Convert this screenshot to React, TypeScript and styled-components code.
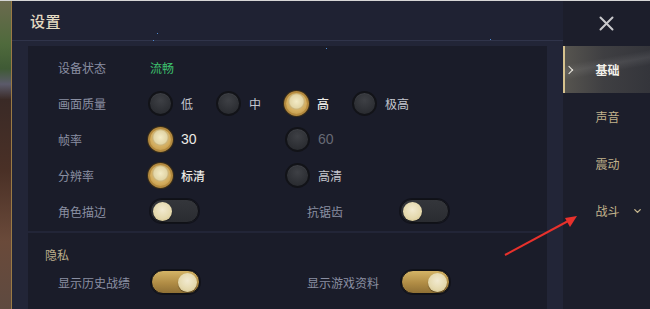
import React from 'react';
import styled, { createGlobalStyle } from 'styled-components';
import { ChevronDown } from 'lucide-react';

const GlobalStyle = createGlobalStyle`
  body {
    margin: 0;
    background: #1b1d2a;
    font-family: "Noto Sans CJK SC", "Noto Sans", sans-serif;
  }
`;

const Screen = styled.div`
  position: relative;
  display: flex;
  width: 650px;
  height: 309px;
  box-sizing: border-box;
  border-top: 1px solid #d6d6d6;
  overflow: hidden;
  background: #1b1d2a;
`;

const Scene = styled.div`
  width: 11px;
  flex-shrink: 0;
  border-right: 1px solid #9a7a44;
  background: linear-gradient(
    180deg,
    #6b6a4e 0%,
    #4f6a3c 14%,
    #3f5a35 22%,
    #5b5a6a 27%,
    #3a2a26 32%,
    #4a3026 55%,
    #6a4a3a 78%,
    #5e4a40 100%
  );
`;

const Panel = styled.section`
  display: flex;
  flex-direction: column;
  width: 551px;
  flex-shrink: 0;
  background: #222537;
`;

const Header = styled.header`
  position: relative;
  display: flex;
  align-items: center;
  height: 39px;
  padding-left: 18px;
  background: #1f2233;
  border-bottom: 1px solid #30344a;
`;

const Title = styled.h1`
  margin: 0;
  font-size: 15px;
  font-weight: 500;
  color: #e4dac2;
  letter-spacing: 0.5px;
`;

const Spark = styled.span<{ x: number; y: number }>`
  position: absolute;
  left: ${p => p.x}px;
  top: ${p => p.y}px;
  width: 1px;
  height: 1px;
  background: #4e8ad0;
`;

const Body = styled.div`
  display: flex;
  flex-direction: column;
  gap: 2px;
  padding: 5px 16px 0;
  flex: 1;
`;

const Card = styled.div<{ grow?: boolean }>`
  display: flex;
  flex-direction: column;
  padding: ${p => (p.grow ? '0' : '3px 0 2px')};
  background: #1a1c29;
  flex: ${p => (p.grow ? 1 : 'none')};
`;

const SectionTitle = styled.div`
  height: 19px;
  margin-top: 12px;
  padding-left: 17px;
  font-size: 12px;
  line-height: 19px;
  color: #bcae8c;
`;

const Row = styled.div`
  display: flex;
  align-items: center;
  height: 36px;
  padding-left: 30px;
`;

const Half = styled.div`
  display: flex;
  align-items: center;
  width: 249px;
  flex-shrink: 0;
`;

const Label = styled.span<{ w?: number }>`
  width: ${p => p.w ?? 90}px;
  flex-shrink: 0;
  font-size: 12px;
  color: #8a8fa2;
`;

const Status = styled.span`
  font-size: 12px;
  color: #3ec26e;
  margin-left: 2px;
`;

const Option = styled.div<{ w?: number }>`
  display: flex;
  align-items: center;
  gap: 8px;
  width: ${p => p.w ?? 68}px;
  flex-shrink: 0;
`;

const Radio = styled.span<{ on?: boolean }>`
  width: 25px;
  height: 25px;
  box-sizing: border-box;
  border-radius: 50%;
  flex-shrink: 0;
  border: 2px solid ${p => (p.on ? '#b48a3e' : '#121318')};
  background: ${p =>
    p.on
      ? 'radial-gradient(circle at 50% 40%, #f3ebc6 0%, #e2d5a6 40%, #cbb479 47%, #d6b062 55%, #b8903f 100%)'
      : 'radial-gradient(circle at 50% 35%, #3e4045 0%, #2e3035 60%, #25272b 100%)'};
  box-shadow: ${p =>
    p.on ? '0 0 0 1px #3a2e18' : 'inset 0 1px 1px rgba(255,255,255,0.06)'};
`;

const OptionText = styled.span<{ tone?: 'on' | 'off' | 'dim'; digits?: boolean }>`
  font-size: ${p => (p.digits ? '14px' : '12px')};
  font-family: ${p =>
    p.digits ? '"Liberation Sans", "Noto Sans", sans-serif' : 'inherit'};
  font-weight: ${p => (p.tone === 'on' && !p.digits ? 500 : 400)};
  color: ${p =>
    p.tone === 'on' ? '#ecebe6' : p.tone === 'dim' ? '#676a75' : '#c4c6ce'};
`;

const Toggle = styled.span<{ on?: boolean }>`
  display: flex;
  align-items: center;
  justify-content: ${p => (p.on ? 'flex-end' : 'flex-start')};
  width: 49px;
  height: 24px;
  box-sizing: border-box;
  padding: 0 2px;
  border-radius: 12px;
  border: 1px solid #101116;
  background: ${p =>
    p.on
      ? 'linear-gradient(180deg, #d4b466 0%, #b08c45 55%, #8f7035 100%)'
      : 'linear-gradient(180deg, #34363b 0%, #2a2c31 100%)'};
  box-shadow: 0 0 0 1px rgba(0, 0, 0, 0.35);
`;

const Knob = styled.span`
  width: 19px;
  height: 19px;
  border-radius: 50%;
  background: radial-gradient(circle at 50% 40%, #f2ead0 0%, #e4d8ac 60%, #c8b680 100%);
  box-shadow: 0 1px 1px rgba(0, 0, 0, 0.4);
`;

const Sidebar = styled.nav`
  display: flex;
  flex-direction: column;
  flex: 1;
  background: #1c1e2b;
`;

const CloseArea = styled.div`
  display: flex;
  align-items: center;
  justify-content: center;
  height: 45px;
`;

const Tab = styled.div<{ active?: boolean }>`
  position: relative;
  display: flex;
  align-items: center;
  justify-content: center;
  height: 47px;
  box-sizing: border-box;
  font-size: 12px;
  font-weight: ${p => (p.active ? 700 : 400)};
  color: ${p => (p.active ? '#f3f1ea' : '#c2b38c')};
  border-left: 2px solid ${p => (p.active ? '#d6c28e' : 'transparent')};
  background: ${p =>
    p.active
      ? 'linear-gradient(170deg, transparent 30%, rgba(255,255,255,0.08) 42%, transparent 55%), linear-gradient(90deg, #56544f 0%, #3f3f42 45%, #34353b 100%)'
      : 'transparent'};
`;

const TabMarker = styled.span`
  position: absolute;
  left: 1px;
  top: 50%;
  width: 5px;
  height: 5px;
  border-top: 1.5px solid #f0ede4;
  border-right: 1.5px solid #f0ede4;
  transform: translateY(-50%) rotate(45deg);
`;

const TabChevron = styled.span`
  position: absolute;
  right: 7px;
  top: 50%;
  display: flex;
  transform: translateY(-50%);
`;

const Annotation = styled.svg`
  position: absolute;
  left: 0;
  top: 0;
  pointer-events: none;
`;

const CloseIcon = () => (
  <svg width="15" height="15" viewBox="0 0 15 15">
    <path d="M1.5 1.5 L13.5 13.5 M13.5 1.5 L1.5 13.5" stroke="#c9c9cc" strokeWidth="2" strokeLinecap="round" />
  </svg>
);

type Opt = { text: string; on?: boolean; dim?: boolean; digits?: boolean };

const RadioGroup: React.FC<{ options: Opt[]; width?: number }> = ({ options, width }) => (
  <>
    {options.map(o => (
      <Option key={o.text} w={width}>
        <Radio on={o.on} />
        <OptionText tone={o.on ? 'on' : o.dim ? 'dim' : 'off'} digits={o.digits}>
          {o.text}
        </OptionText>
      </Option>
    ))}
  </>
);

const Switch: React.FC<{ on?: boolean }> = ({ on }) => (
  <Toggle on={on}>
    <Knob />
  </Toggle>
);

const tabs = ['基础', '声音', '震动', '战斗'];

const App: React.FC = () => (
  <>
    <GlobalStyle />
    <Screen>
      <Scene />
      <Panel>
        <Header>
          <Title>设置</Title>
          <Spark x={145} y={32} />
          <Spark x={141} y={39} />
          <Spark x={314} y={47} />
          <Spark x={478} y={38} />
        </Header>
        <Body>
          <Card>
            <Row>
              <Label>设备状态</Label>
              <Status>流畅</Status>
            </Row>
            <Row>
              <Label>画面质量</Label>
              <RadioGroup
                options={[{ text: '低' }, { text: '中' }, { text: '高', on: true }, { text: '极高' }]}
              />
            </Row>
            <Row>
              <Label>帧率</Label>
              <RadioGroup
                width={137}
                options={[
                  { text: '30', on: true, digits: true },
                  { text: '60', dim: true, digits: true },
                ]}
              />
            </Row>
            <Row>
              <Label>分辨率</Label>
              <RadioGroup width={137} options={[{ text: '标清', on: true }, { text: '高清' }]} />
            </Row>
            <Row>
              <Half>
                <Label w={92}>角色描边</Label>
                <Switch />
              </Half>
              <Half>
                <Label w={93}>抗锯齿</Label>
                <Switch />
              </Half>
            </Row>
          </Card>
          <Card grow>
            <SectionTitle>隐私</SectionTitle>
            <Row>
              <Half>
                <Label w={93}>显示历史战绩</Label>
                <Switch on />
              </Half>
              <Half>
                <Label w={94}>显示游戏资料</Label>
                <Switch on />
              </Half>
            </Row>
          </Card>
        </Body>
      </Panel>
      <Sidebar>
        <CloseArea>
          <CloseIcon />
        </CloseArea>
        {tabs.map((t, i) => (
          <Tab key={t} active={i === 0}>
            {i === 0 && <TabMarker />}
            <span>{t}</span>
            {i === 3 && (
              <TabChevron>
                <ChevronDown size={11} strokeWidth={3} color="#c2b38c" />
              </TabChevron>
            )}
          </Tab>
        ))}
      </Sidebar>
      <Annotation width="650" height="309" viewBox="0 0 650 309">
        <line x1="505" y1="254" x2="570" y2="219" stroke="#e8312c" strokeWidth="2" />
        <polygon points="577,215 565,217 570,226" fill="#e8312c" />
      </Annotation>
    </Screen>
  </>
);

export default App;
